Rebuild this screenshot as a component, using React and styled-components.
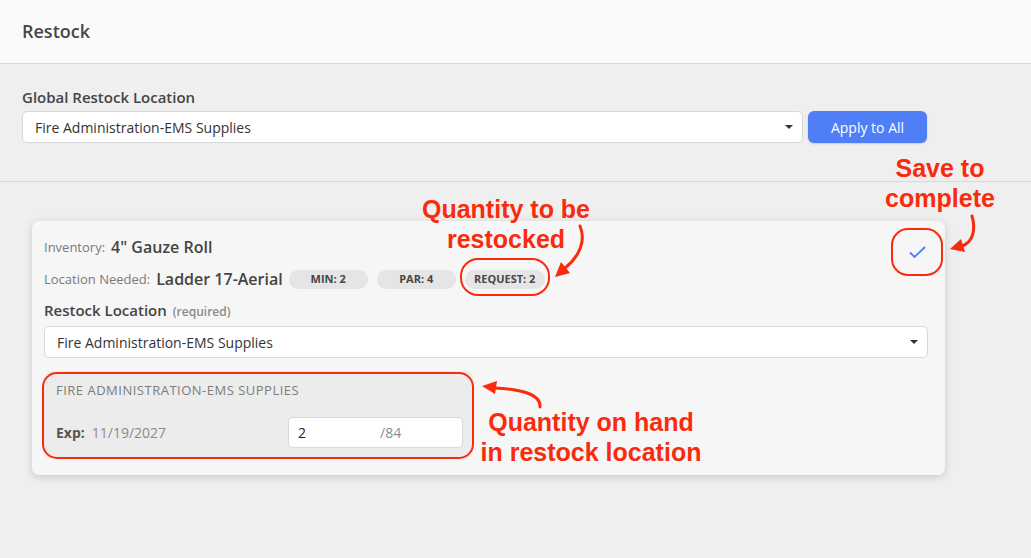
import React from 'react';
import styled, { createGlobalStyle, css } from 'styled-components';

const RED = '#fa2b0c';
const BLUE = '#4f7ef7';

const GlobalStyle = createGlobalStyle`
  html, body {
    margin: 0;
    padding: 0;
    background: #efefef;
  }
  body {
    font-family: 'Open Sans', 'Noto Sans', sans-serif;
    color: #444;
  }
  * {
    box-sizing: border-box;
  }
`;

const ring = css`
  position: relative;
  &::after {
    content: '';
    position: absolute;
    border: 2.5px solid ${RED};
    pointer-events: none;
  }
`;

const StyledPage = styled.div`
  position: relative;
  min-height: 558px;
  background: #efefef;
`;

const StyledHeader = styled.header`
  height: 64px;
  display: flex;
  align-items: center;
  padding: 0 22px 1px;
  background: #fafafa;
  border-bottom: 1px solid #dadada;
`;

const StyledTitle = styled.h1`
  margin: 0;
  font-size: 18px;
  font-weight: 600;
  color: #474747;
`;

const StyledGlobal = styled.section`
  padding: 23px 104px 38px 22px;
  border-bottom: 1px solid #d8d8d8;
`;

const StyledLabel = styled.label`
  display: block;
  font-size: 15px;
  line-height: 20px;
  font-weight: 600;
  color: #454545;
  margin-bottom: 4px;

  small {
    font-size: 12px;
    color: #8a8a8a;
    margin-left: 6px;
  }
`;

const StyledControlRow = styled.div`
  display: flex;
  gap: 5px;
`;

const StyledSelect = styled.div`
  flex: 1;
  height: 32px;
  display: flex;
  align-items: center;
  justify-content: space-between;
  padding: 0 9px 0 12px;
  background: #fff;
  border: 1px solid #d9d9d9;
  border-radius: 5px;
  font-size: 14px;
  color: #333;
`;

const StyledCaret = styled.span`
  width: 0;
  height: 0;
  border-left: 4px solid transparent;
  border-right: 4px solid transparent;
  border-top: 4px solid #333;
`;

const StyledApplyButton = styled.button`
  width: 119px;
  height: 32px;
  border: 0;
  border-radius: 6px;
  background: ${BLUE};
  color: #fff;
  font-family: inherit;
  font-size: 14px;
  box-shadow: 0 1px 2px rgba(0, 0, 0, 0.15);
`;

const StyledList = styled.main`
  padding: 39px 86px 40px 32px;
`;

const StyledCard = styled.article`
  background: #f6f6f6;
  border-radius: 7px;
  padding: 15px 17px 16px 12px;
  box-shadow: 0 2px 8px rgba(0, 0, 0, 0.16);
`;

const StyledTopRow = styled.div`
  display: flex;
  justify-content: space-between;
  align-items: flex-start;
`;

const StyledInfo = styled.div`
  display: flex;
  flex-direction: column;
  gap: 10px;
`;

const StyledInfoLine = styled.div`
  display: flex;
  align-items: center;
  gap: 6px;
  line-height: 22px;

  span {
    font-size: 13px;
    color: #7a7a7a;
  }

  strong {
    font-size: 16px;
    font-weight: 600;
    color: #444;
  }
`;

const StyledPills = styled.div`
  display: flex;
  gap: 9px;
`;

const StyledPill = styled.div`
  width: ${({ $wide }) => ($wide ? '80px' : '79px')};
  height: 19px;
  display: flex;
  align-items: center;
  justify-content: center;
  border-radius: 10px;
  background: #e5e5e5;
  font-size: 11px;
  font-weight: 700;
  color: #474747;
  ${({ $annotated }) =>
    $annotated &&
    css`
      ${ring};
      &::after {
        top: -12px;
        bottom: -7px;
        left: -5px;
        right: -5px;
        border-radius: 18px;
      }
    `}
`;

const StyledSaveButton = styled.button`
  width: 52px;
  height: 48px;
  margin: -8px -15px 0 0;
  display: flex;
  align-items: center;
  justify-content: center;
  background: transparent;
  border: 0;
  padding: 0;
  ${ring};
  &::after {
    inset: 0;
    border-radius: 17px;
  }
`;

const StyledSection = styled.div`
  margin-top: 10px;
`;

const StyledLot = styled.div`
  width: 429px;
  margin-top: 13px;
  padding: 10px 10px 11px 12px;
  background: #ececec;
  border-radius: 7px;
  ${ring};
  &::after {
    inset: 1px -1px 0 -2px;
    border-radius: 15px;
  }
`;

const StyledLotName = styled.div`
  font-size: 13px;
  line-height: 18px;
  letter-spacing: 0.5px;
  color: #7c7c7c;
  text-transform: uppercase;
`;

const StyledExpRow = styled.div`
  margin-top: 18px;
  display: flex;
  align-items: center;
  justify-content: space-between;
`;

const StyledExp = styled.div`
  font-size: 14px;
  color: #8a8a8a;

  b {
    font-weight: 700;
    color: #555;
    margin-right: 7px;
  }
`;

const StyledQtyInput = styled.div`
  width: 175px;
  height: 31px;
  display: flex;
  align-items: center;
  padding-left: 9px;
  background: #fff;
  border: 1px solid #d9d9d9;
  border-radius: 5px;
  font-size: 14px;
  color: #222;

  span:first-child {
    width: 82px;
  }
  span:last-child {
    color: #8d8d8d;
  }
`;

const StyledOverlay = styled.svg`
  position: absolute;
  inset: 0;
  pointer-events: none;
`;

const StyledNote = styled.div`
  position: absolute;
  top: ${({ $top }) => $top}px;
  left: ${({ $left }) => $left}px;
  width: ${({ $width }) => $width}px;
  text-align: center;
  font-family: 'Liberation Sans', Arial, sans-serif;
  font-weight: 700;
  font-size: 25px;
  line-height: 30px;
  color: ${RED};
`;

const Select = ({ value }) => (
  <StyledSelect>
    {value}
    <StyledCaret />
  </StyledSelect>
);

const Arrows = () => (
  <StyledOverlay width="1031" height="558">
    <g fill="none" stroke={RED} strokeWidth="3" strokeLinecap="round">
      <path d="M580 226 C586 240 580 256 565 268" />
      <path d="M972 216 C976 230 973 242 962 246" />
      <path d="M540 407 C541 394 520 389 495 388" />
    </g>
    <g fill={RED}>
      <polygon points="555,277 570,273 561,262" />
      <polygon points="950,249 965,252 961,239" />
      <polygon points="482,386 497,381 495,394" />
    </g>
  </StyledOverlay>
);

const App = () => (
  <StyledPage>
    <GlobalStyle />
    <StyledHeader>
      <StyledTitle>Restock</StyledTitle>
    </StyledHeader>

    <StyledGlobal>
      <StyledLabel>Global Restock Location</StyledLabel>
      <StyledControlRow>
        <Select value="Fire Administration-EMS Supplies" />
        <StyledApplyButton>Apply to All</StyledApplyButton>
      </StyledControlRow>
    </StyledGlobal>

    <StyledList>
      <StyledCard>
        <StyledTopRow>
          <StyledInfo>
            <StyledInfoLine>
              <span>Inventory:</span>
              <strong>4" Gauze Roll</strong>
            </StyledInfoLine>
            <StyledInfoLine>
              <span>Location Needed:</span>
              <strong>Ladder 17-Aerial</strong>
              <StyledPills>
                <StyledPill>MIN: 2</StyledPill>
                <StyledPill>PAR: 4</StyledPill>
                <StyledPill $wide $annotated>REQUEST: 2</StyledPill>
              </StyledPills>
            </StyledInfoLine>
          </StyledInfo>
          <StyledSaveButton aria-label="Save">
            <svg width="17" height="12" viewBox="0 0 17 12" fill="none">
              <path d="M1 6.5 L5.5 11 L16 1" stroke={BLUE} strokeWidth="1.8" />
            </svg>
          </StyledSaveButton>
        </StyledTopRow>

        <StyledSection>
          <StyledLabel>
            Restock Location<small>(required)</small>
          </StyledLabel>
          <Select value="Fire Administration-EMS Supplies" />
        </StyledSection>

        <StyledLot>
          <StyledLotName>Fire Administration-EMS Supplies</StyledLotName>
          <StyledExpRow>
            <StyledExp>
              <b>Exp:</b>11/19/2027
            </StyledExp>
            <StyledQtyInput>
              <span>2</span>
              <span>/84</span>
            </StyledQtyInput>
          </StyledExpRow>
        </StyledLot>
      </StyledCard>
    </StyledList>

    <Arrows />
    <StyledNote $top={153} $left={870} $width={140}>
      Save to
      <br />
      complete
    </StyledNote>
    <StyledNote $top={194} $left={406} $width={200}>
      Quantity to be
      <br />
      restocked
    </StyledNote>
    <StyledNote $top={407} $left={471} $width={240}>
      Quantity on hand
      <br />
      in restock location
    </StyledNote>
  </StyledPage>
);

export default App;
